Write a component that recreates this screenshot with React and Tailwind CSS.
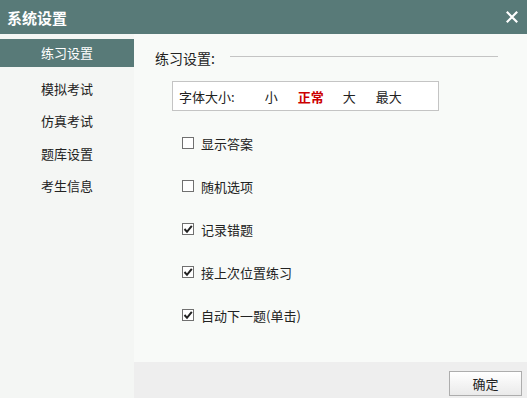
import React from "react";

const font = { fontFamily: '"Noto Sans CJK SC", "Noto Sans", sans-serif' };

function Check({ checked, label }) {
  return (
    <div className="flex items-center h-[20px]">
      <div className="w-[12px] h-[12px] border border-[#707070] bg-white flex items-center justify-center">
        {checked && (
          <svg width="10" height="10" viewBox="0 0 10 10">
            <path d="M1.5 5 L4 7.8 L8.8 1.8" fill="none" stroke="#222" strokeWidth="2" />
          </svg>
        )}
      </div>
      <span className="ml-[7px] text-[13px] text-[#222] leading-none">{label}</span>
    </div>
  );
}

export default function App() {
  const items = ["模拟考试", "仿真考试", "题库设置", "考生信息"];
  return (
    <div className="w-[527px] h-[398px] flex flex-col bg-[#f6f8f6] overflow-hidden" style={font}>
      <div className="h-[34px] bg-[#587a78] flex items-center justify-between shrink-0">
        <span className="ml-[7px] text-white text-[15px] font-bold leading-none">系统设置</span>
        <svg className="mr-[9px]" width="12" height="12" viewBox="0 0 12 12">
          <path d="M0.8 0.8 L11.2 11.2 M11.2 0.8 L0.8 11.2" stroke="white" strokeWidth="2.2" />
        </svg>
      </div>
      <div className="flex flex-1">
        <div className="w-[134px] bg-[#f4f6f4] pt-[5px] flex flex-col">
          <div className="h-[28px] bg-[#587a78] flex items-center pl-[41px] text-white text-[13px]">练习设置</div>
          <div className="mt-[5px] flex flex-col">
            {items.map((t) => (
              <div key={t} className="h-[32.5px] flex items-center pl-[41px] text-[13px] text-[#222]">{t}</div>
            ))}
          </div>
        </div>
        <div className="flex-1 flex flex-col">
          <div className="flex-1 bg-[#f8faf8] pl-[21px] pt-[14px]">
            <div className="flex items-center h-[20px]">
              <span className="text-[14px] text-[#222] leading-none">练习设置:</span>
              <div className="ml-[15px] w-[268px] h-px bg-[#c4c4c4] -mt-[3px]"></div>
            </div>
            <div className="mt-[13px] ml-[17px] w-[267px] h-[30px] bg-white border border-[#c4c4c4] flex items-center text-[13px] text-[#222] leading-none">
              <span className="ml-[6px]">字体大小:</span>
              <span className="ml-[30px]">小</span>
              <span className="ml-[20px] text-[#cc0000] font-bold">正常</span>
              <span className="ml-[19px]">大</span>
              <span className="ml-[20px]">最大</span>
            </div>
            <div className="ml-[27px] mt-[22px] flex flex-col gap-[23px]">
              <Check label="显示答案" />
              <Check label="随机选项" />
              <Check checked label="记录错题" />
              <Check checked label="接上次位置练习" />
              <Check checked label="自动下一题(单击)" />
            </div>
          </div>
          <div className="h-[36px] bg-[#eeeeee] flex items-center justify-end pr-[5px]">
            <button className="w-[73px] h-[25px] border border-[#adadad] bg-gradient-to-b from-white to-[#eaeaea] text-[13px] text-[#222] leading-none mt-[7px]" style={font}>确定</button>
          </div>
        </div>
      </div>
    </div>
  );
}
